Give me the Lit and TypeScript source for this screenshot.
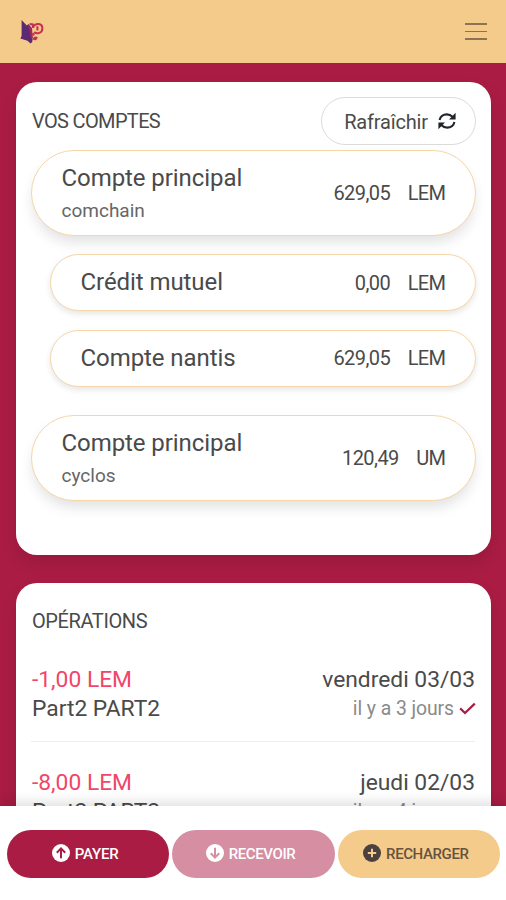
import { LitElement, html, css, svg } from "lit";
import { customElement } from "lit/decorators.js";

interface Account {
  name: string;
  backend?: string;
  amount: string;
  unit: string;
  kind: "main" | "sub";
}

interface Operation {
  amount: string;
  who: string;
  date: string;
  ago: string;
}

const accounts: Account[] = [
  { name: "Compte principal", backend: "comchain", amount: "629,05", unit: "LEM", kind: "main" },
  { name: "Crédit mutuel", amount: "0,00", unit: "LEM", kind: "sub" },
  { name: "Compte nantis", amount: "629,05", unit: "LEM", kind: "sub" },
  { name: "Compte principal", backend: "cyclos", amount: "120,49", unit: "UM", kind: "main" },
];

const operations: Operation[] = [
  { amount: "-1,00 LEM", who: "Part2 PART2", date: "vendredi 03/03", ago: "il y a 3 jours" },
  { amount: "-8,00 LEM", who: "Part2 PART2", date: "jeudi 02/03", ago: "il y a 4 jours" },
];

const logo = html`<svg class="logo" viewBox="0 0 24 26" width="24" height="26">
  <path d="M1.6 1 L6.8 6.6 L8.4 5 L11.6 9 L12.6 20.5 L12.2 23 L10.6 24.4 L7.4 21.8 L0.4 19.4 L1.6 17 Z" fill="#5c2a72" />
  <path d="M8.4 6.4 L12 9 L12.8 19 L11 19.6 Z" fill="#a32858" />
  <path d="M9.6 5 L12.8 5.4 L13.2 9 M12.8 14.2 L14 16.4" fill="none" stroke="#c5304f" stroke-width="2.2" />
  <path d="M12.8 20.6 C13 17.6 15.4 16.6 17.8 18.2 C17.2 21 15 22.2 12.8 20.6 Z" fill="#c5304f" />
  <path d="M13.8 7.4 C15.6 3.8 22.2 4 22.4 9.2 C22.4 14 17 15.6 14.2 13 M17.4 7.2 V11.6" fill="none" stroke="#c5304f" stroke-width="2" />
</svg>`;

const refresh = html`<svg class="refresh" viewBox="0 0 18 18" width="18" height="18">
  <g fill="none" stroke="#212529" stroke-width="2.1">
    <path d="M1.6 8 C2.2 4.6 5.2 2.4 8.8 2.4 C11.2 2.4 13 3.3 14.4 4.8" />
    <path d="M16.4 10 C15.8 13.4 12.8 15.6 9.2 15.6 C6.8 15.6 5 14.7 3.6 13.2" />
  </g>
  <path d="M17.6 0.8 V7.4 H11 Z M0.4 17.2 V10.6 H7 Z" fill="#212529" />
</svg>`;

const check = html`<svg class="check" viewBox="0 0 17 13" width="17" height="13">
  <path d="M1.2 6.4 L6 11 L15.8 1.6" fill="none" stroke="#aa1c44" stroke-width="2.2" />
</svg>`;

const glyphs = {
  up: svg`<path d="M9 14.2V4.6M4.8 8.8L9 4.4L13.2 8.8" />`,
  down: svg`<path d="M9 3.8V13.4M4.8 9.2L9 13.6L13.2 9.2" />`,
  plus: svg`<path d="M9 4.8V13.2M4.8 9H13.2" />`,
};

const actions: { label: string; tone: string; glyph: keyof typeof glyphs }[] = [
  { label: "PAYER", tone: "pay", glyph: "up" },
  { label: "RECEVOIR", tone: "receive", glyph: "down" },
  { label: "RECHARGER", tone: "topup", glyph: "plus" },
];

@customElement("app-root")
export class AppRoot extends LitElement {
  static styles = css`
    :host {
      display: flex;
      flex-direction: column;
      height: 900px;
      overflow: hidden;
      background: #aa1c44;
      color: #4a4a4a;
      font-family: Roboto, "Liberation Sans", sans-serif;
    }
    * { box-sizing: border-box; }
    header {
      flex: none;
      height: 63px;
      padding: 0 19px 0 20px;
      display: flex;
      align-items: center;
      justify-content: space-between;
      background: #f5cb8b;
    }
    .logo { display: block; }
    .burger { display: grid; gap: 6px; width: 22px; }
    .burger i { height: 1.4px; background: #8f7252; }
    main {
      flex: 1;
      min-height: 0;
      overflow: hidden;
      padding: 19px 15px 0 16px;
      display: flex;
      flex-direction: column;
      gap: 28px;
    }
    .card {
      flex: none;
      background: #fff;
      border-radius: 21px;
      padding: 0 15px;
      box-shadow: 0 8px 16px rgba(10, 10, 10, 0.1);
    }
    .accounts { height: 473px; }
    .operations { height: 300px; padding-right: 16px; }
    .head {
      height: 68px;
      padding: 9px 0 0 1px;
      display: flex;
      align-items: center;
      justify-content: space-between;
    }
    h2 {
      margin: 0;
      font-weight: 400;
      font-size: 20px;
      letter-spacing: -0.65px;
      color: #4a4a4a;
      white-space: nowrap;
    }
    .operations h2 { padding-top: 24px; line-height: 28px; padding-left: 1px; letter-spacing: -0.4px; }
    .button {
      width: 155px;
      height: 48px;
      border: 1px solid #dbdbdb;
      border-radius: 24px;
      display: flex;
      align-items: center;
      justify-content: center;
      gap: 10px;
      font-size: 20px;
      letter-spacing: -0.2px;
      padding-left: 3px;
    }
    .refresh-label { padding-top: 2px; }
    .account {
      background: #fff;
      border: 1.5px solid #f6d6a8;
      display: flex;
      align-items: center;
      justify-content: space-between;
      padding: 0 29.5px;
      box-shadow: 0 8px 14px -2px rgba(10, 10, 10, 0.12);
    }
    .main { height: 86px; border-radius: 43px; }
    .sub {
      height: 57px;
      margin-left: 19px;
      border-radius: 29px;
      box-shadow: 0 3px 6px rgba(10, 10, 10, 0.1);
    }
    .main + .sub { margin-top: 18px; }
    .sub + .sub { margin-top: 18.5px; }
    .sub + .main { margin-top: 28.5px; }
    .name { font-size: 24px; letter-spacing: -0.07px; line-height: 34px; }
    .main .name { padding-top: 2px; }
    .sub .name { margin-top: -1px; }
    .backend { font-size: 19px; line-height: 32px; color: #666; }
    .money { display: flex; gap: 17.5px; font-size: 20px; letter-spacing: -0.58px; }
    .op {
      display: flex;
      justify-content: space-between;
      padding: 30px 0 0 1px;
      border-bottom: 1px solid #ededed;
      font-size: 22.8px;
      line-height: 29px;
      height: 106.5px;
    }
    .op + .op { padding-top: 26px; }
    .amount { color: #f14668; }
    .when { text-align: right; }
    .ago {
      font-size: 19.4px;
      letter-spacing: -0.08px;
      color: #8a8a8a;
      display: flex;
      gap: 5px;
      align-items: center;
      justify-content: flex-end;
    }
    .check { margin-right: -1px; }
    footer {
      flex: none;
      height: 94px;
      padding: 24px 6px 0 7px;
      display: flex;
      gap: 3px;
      background: #fff;
      box-shadow: 0 -3px 12px rgba(10, 10, 10, 0.14);
      position: relative;
    }
    .action {
      flex: 1;
      height: 48px;
      border-radius: 24px;
      display: flex;
      align-items: center;
      justify-content: center;
      gap: 5px;
      padding: 0 6px 2px 0;
      font-size: 15px;
      letter-spacing: -0.4px;
      font-weight: 500;
      white-space: nowrap;
      color: #fff;
      --disc: #fff;
      --mark: #aa1c44;
    }
    .pay { background: #aa1c44; letter-spacing: -0.2px; }
    .receive { background: #d58ea2; --mark: #d58ea2; }
    .topup { background: #f5cb8b; color: #65533f; --disc: #4a4040; --mark: #f5cb8b; }
    .action span { padding-top: 2px; }
    .action circle { fill: var(--disc); }
    .action path { fill: none; stroke: var(--mark); stroke-width: 2; }
  `;

  render() {
    return html`
      <header>
        ${logo}
        <div class="burger"><i></i><i></i><i></i></div>
      </header>
      <main>
        <section class="card accounts">
          <div class="head">
            <h2>VOS COMPTES</h2>
            <div class="button"><span class="refresh-label">Rafraîchir</span>${refresh}</div>
          </div>
          ${accounts.map(
            (a) => html`<div class="account ${a.kind}">
              <div>
                <div class="name">${a.name}</div>
                ${a.backend ? html`<div class="backend">${a.backend}</div>` : null}
              </div>
              <div class="money"><span>${a.amount}</span><span>${a.unit}</span></div>
            </div>`
          )}
        </section>
        <section class="card operations">
          <h2>OPÉRATIONS</h2>
          ${operations.map(
            (o) => html`<div class="op">
              <div>
                <div class="amount">${o.amount}</div>
                <div class="who">${o.who}</div>
              </div>
              <div class="when">
                <div>${o.date}</div>
                <div class="ago"><span>${o.ago}</span>${check}</div>
              </div>
            </div>`
          )}
        </section>
      </main>
      <footer>
        ${actions.map(
          (a) => html`<div class="action ${a.tone}">
            <svg viewBox="0 0 18 18" width="18" height="18"><circle cx="9" cy="9" r="9" />${glyphs[a.glyph]}</svg>
            <span>${a.label}</span>
          </div>`
        )}
      </footer>
    `;
  }
}
